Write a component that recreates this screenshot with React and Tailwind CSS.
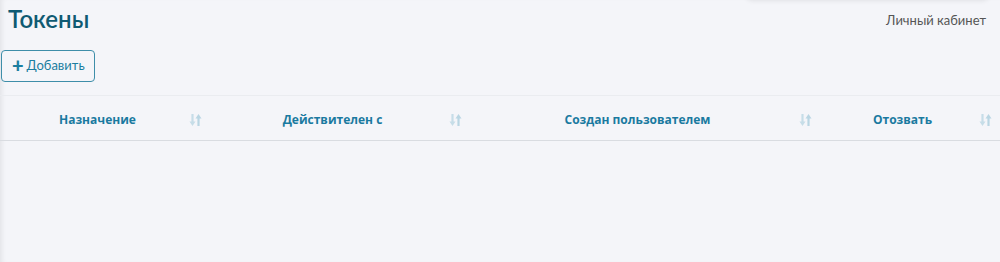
import React from 'react';

function SortIcon() {
  return (
    <svg width="13" height="14" viewBox="0 0 13 14" className="shrink-0">
      {/* down arrow */}
      <path d="M3.5 1v9" stroke="#c6dde8" strokeWidth="2.2" />
      <path d="M0.5 8.5l3 4.5 3-4.5z" fill="#c6dde8" />
      {/* up arrow */}
      <path d="M9.5 13V4" stroke="#b9d6e3" strokeWidth="2.2" />
      <path d="M6.5 5.5l3-4.5 3 4.5z" fill="#b9d6e3" />
    </svg>
  );
}

const columns = [
  { title: 'Назначение', sort: true },
  { title: 'Действителен с', sort: true },
  { title: 'Создан пользователем', sort: true },
  { title: 'Отозвать', sort: true },
];

export default function App() {
  return (
    <div
      className="relative w-[1000px] h-[262px] overflow-hidden bg-[#f4f5f9] shadow-[inset_5px_0_5px_-3px_rgba(0,0,0,0.07)]"
      style={{ fontFamily: '"Open Sans", "Noto Sans", sans-serif' }}
    >
      {/* dropdown edge from above */}
      <div className="absolute left-[745px] top-[-24px] w-[245px] h-[24px] rounded-b-lg bg-[#f4f5f9] shadow-[0_1px_5px_rgba(0,0,0,0.08)]" />

      {/* Header */}
      <div className="flex items-start justify-between pl-[8px] pr-[14px] pt-[3px]">
        <h1 className="text-[24px] leading-[32px] font-semibold text-[#0f5a72]" style={{ fontFamily: 'Lato, sans-serif' }}>
          Токены
        </h1>
        <div className="text-[13px] text-[#555] mt-[8px]" style={{ fontFamily: 'Lato, sans-serif' }}>
          Личный кабинет
        </div>
      </div>

      {/* Toolbar */}
      <div className="pl-[1px] pt-[15px]">
        <button className="h-[32px] w-[94px] flex items-center gap-[3px] pl-[10px] border border-[#3e8ea9] rounded-[4px] text-[13px] text-[#1b7ea0] bg-[#f4f5f9]" style={{ fontFamily: 'Lato, sans-serif' }}>
          <span className="text-[20px] font-black leading-none mt-[-3px]">+</span>
          Добавить
        </button>
      </div>

      {/* Table header */}
      <div className="mt-[13px] grid grid-cols-[210px_260px_350px_180px] h-[46px] pt-[3px] border-t border-[#eaecf0] border-b border-b-[#d9dce1]">
        {columns.map((c) => (
          <div key={c.title} className="flex items-center pr-[8px]">
            <div className="flex-1 text-center text-[12px] font-bold text-[#1a7aa0] pl-[6px]">
              {c.title}
            </div>
            {c.sort && <SortIcon />}
          </div>
        ))}
      </div>
    </div>
  );
}
